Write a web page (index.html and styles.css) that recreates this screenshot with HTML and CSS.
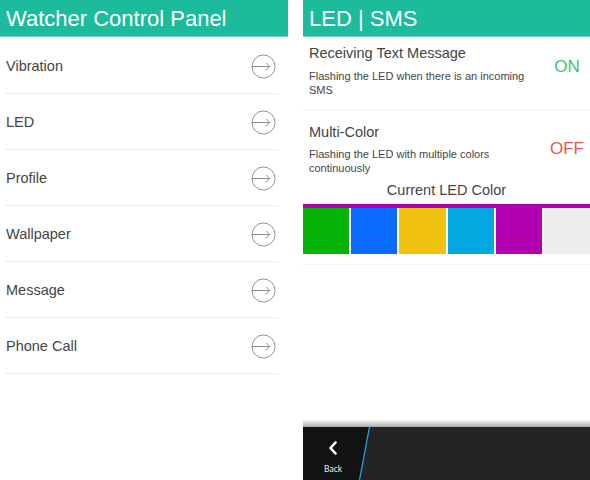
FILE: index.html
```html
<!DOCTYPE html>
<html>
<head>
<meta charset="utf-8">
<link rel="stylesheet" href="styles.css">
</head>
<body>
<div class="screen">
  <section class="panel left">
    <header class="bar-title">Watcher Control Panel</header>
    <ul class="menu">
      <li class="menu-item"><span>Vibration</span><svg class="go" viewBox="0 0 26 26"><circle cx="13" cy="13" r="12"/><path d="M1 13H19.5M15.5 9L19.5 13L15.5 17"/></svg></li>
      <li class="menu-item"><span>LED</span><svg class="go" viewBox="0 0 26 26"><circle cx="13" cy="13" r="12"/><path d="M1 13H19.5M15.5 9L19.5 13L15.5 17"/></svg></li>
      <li class="menu-item"><span>Profile</span><svg class="go" viewBox="0 0 26 26"><circle cx="13" cy="13" r="12"/><path d="M1 13H19.5M15.5 9L19.5 13L15.5 17"/></svg></li>
      <li class="menu-item"><span>Wallpaper</span><svg class="go" viewBox="0 0 26 26"><circle cx="13" cy="13" r="12"/><path d="M1 13H19.5M15.5 9L19.5 13L15.5 17"/></svg></li>
      <li class="menu-item"><span>Message</span><svg class="go" viewBox="0 0 26 26"><circle cx="13" cy="13" r="12"/><path d="M1 13H19.5M15.5 9L19.5 13L15.5 17"/></svg></li>
      <li class="menu-item"><span>Phone Call</span><svg class="go" viewBox="0 0 26 26"><circle cx="13" cy="13" r="12"/><path d="M1 13H19.5M15.5 9L19.5 13L15.5 17"/></svg></li>
    </ul>
  </section>
  <section class="panel right">
    <header class="bar-title">LED | SMS</header>
    <div class="setting first">
      <div class="setting-text">
        <div class="setting-title">Receiving Text Message</div>
        <div class="setting-desc">Flashing the LED when there is an incoming SMS</div>
      </div>
      <div class="setting-value on">ON</div>
    </div>
    <div class="setting second">
      <div class="setting-text">
        <div class="setting-title">Multi-Color</div>
        <div class="setting-desc">Flashing the LED with multiple colors continuously</div>
      </div>
      <div class="setting-value off">OFF</div>
    </div>
    <div class="current-label">Current LED Color</div>
    <div class="swatches">
      <div class="swatch green"></div>
      <div class="swatch blue"></div>
      <div class="swatch yellow"></div>
      <div class="swatch cyan"></div>
      <div class="swatch purple"></div>
      <div class="swatch gray"></div>
    </div>
    <div class="spacer"></div>
    <div class="action-shadow"></div>
    <footer class="action-bar">
      <svg class="action-bg" viewBox="0 0 287 53" preserveAspectRatio="none"><polygon points="0,0 66,0 56,53 0,53" fill="#121212"/><line x1="66.5" y1="0" x2="56.5" y2="53" stroke="#1aa3dc" stroke-width="1.3"/></svg>
      <div class="back">
        <svg class="chev" viewBox="0 0 10 14"><path d="M7.5 1.5L2.5 7L7.5 12.5"/></svg>
        <span class="back-label">Back</span>
      </div>
    </footer>
  </section>
</div>
</body>
</html>
```
FILE: styles.css
```css
* { box-sizing: border-box; }
html, body { margin: 0; padding: 0; background: #fff; }
body { font-family: "Liberation Sans", Arial, sans-serif; color: #444; }
.screen { display: flex; width: 590px; height: 480px; gap: 15px; }
.panel { display: flex; flex-direction: column; height: 480px; }
.left { width: 288px; }
.right { flex: 1; }
.bar-title {
  height: 37px; background: #1bbb9b; color: #fff;
  font-size: 22px; line-height: 37px; padding-left: 6px;
  border-bottom: 1px solid #6fd6c1;
}
.menu { list-style: none; margin: 1px 0 0; padding: 0 9px 0 5px; }
.menu-item {
  height: 56px; display: flex; align-items: center; justify-content: space-between;
  border-bottom: 1px solid #ececec; padding: 1px 3px 0 1px;
  font-size: 14.5px;
}
.go { width: 25px; height: 25px; fill: none; stroke: #808080; stroke-width: 0.9; }
.setting { display: flex; align-items: center; padding: 0 3px 0 6px; }
.setting.first { padding-top: 7px; padding-bottom: 12px; border-bottom: 1px solid #efefef; height: 73px; }
.setting.second { padding-top: 13px; }
.setting-text { flex: 1; }
.setting-title { font-size: 14.5px; line-height: 18px; }
.setting-desc { font-size: 11px; line-height: 13.5px; width: 218px; margin-top: 7px; }
.first .setting-desc { margin-top: 8px; }
.setting-value { width: 40px; text-align: center; font-size: 17px; }
.on { color: #3cc46e; margin-top: -8px; }
.off { color: #e4574b; margin-top: -1px; }
.current-label { text-align: center; font-size: 14.5px; line-height: 18px; margin-top: 6px; }
.swatches {
  display: flex; gap: 2px; margin-top: 5px; border-top: 4px solid #ae00ae;
  height: 50px; padding-bottom: 0;
}
.swatch { flex: 1; }
.green { background: #04b304; }
.blue { background: #0a6bff; }
.yellow { background: #f1c311; }
.cyan { background: #02a8df; }
.purple { background: #b000b0; }
.gray { background: #eaeced; }
.spacer { flex: 1; border-top: 1px solid #f0f0f0; margin-top: 10px; }
.action-shadow { height: 7px; background: linear-gradient(#f8f8f8, #a9a9a9); }
.action-bar { position: relative; height: 53px; background: #242424; display: flex; }
.action-bg { position: absolute; left: 0; top: 0; width: 100%; height: 100%; }
.back {
  position: relative; width: 60px; display: flex; flex-direction: column; align-items: center;
  padding-top: 14px;
}
.chev { width: 10px; height: 14px; fill: none; stroke: #fff; stroke-width: 2.6; stroke-linecap: round; stroke-linejoin: round; }
.back-label { color: #eee; font-size: 8.5px; font-family: "Lato", "Liberation Sans", sans-serif; margin-top: 9px; }
```
